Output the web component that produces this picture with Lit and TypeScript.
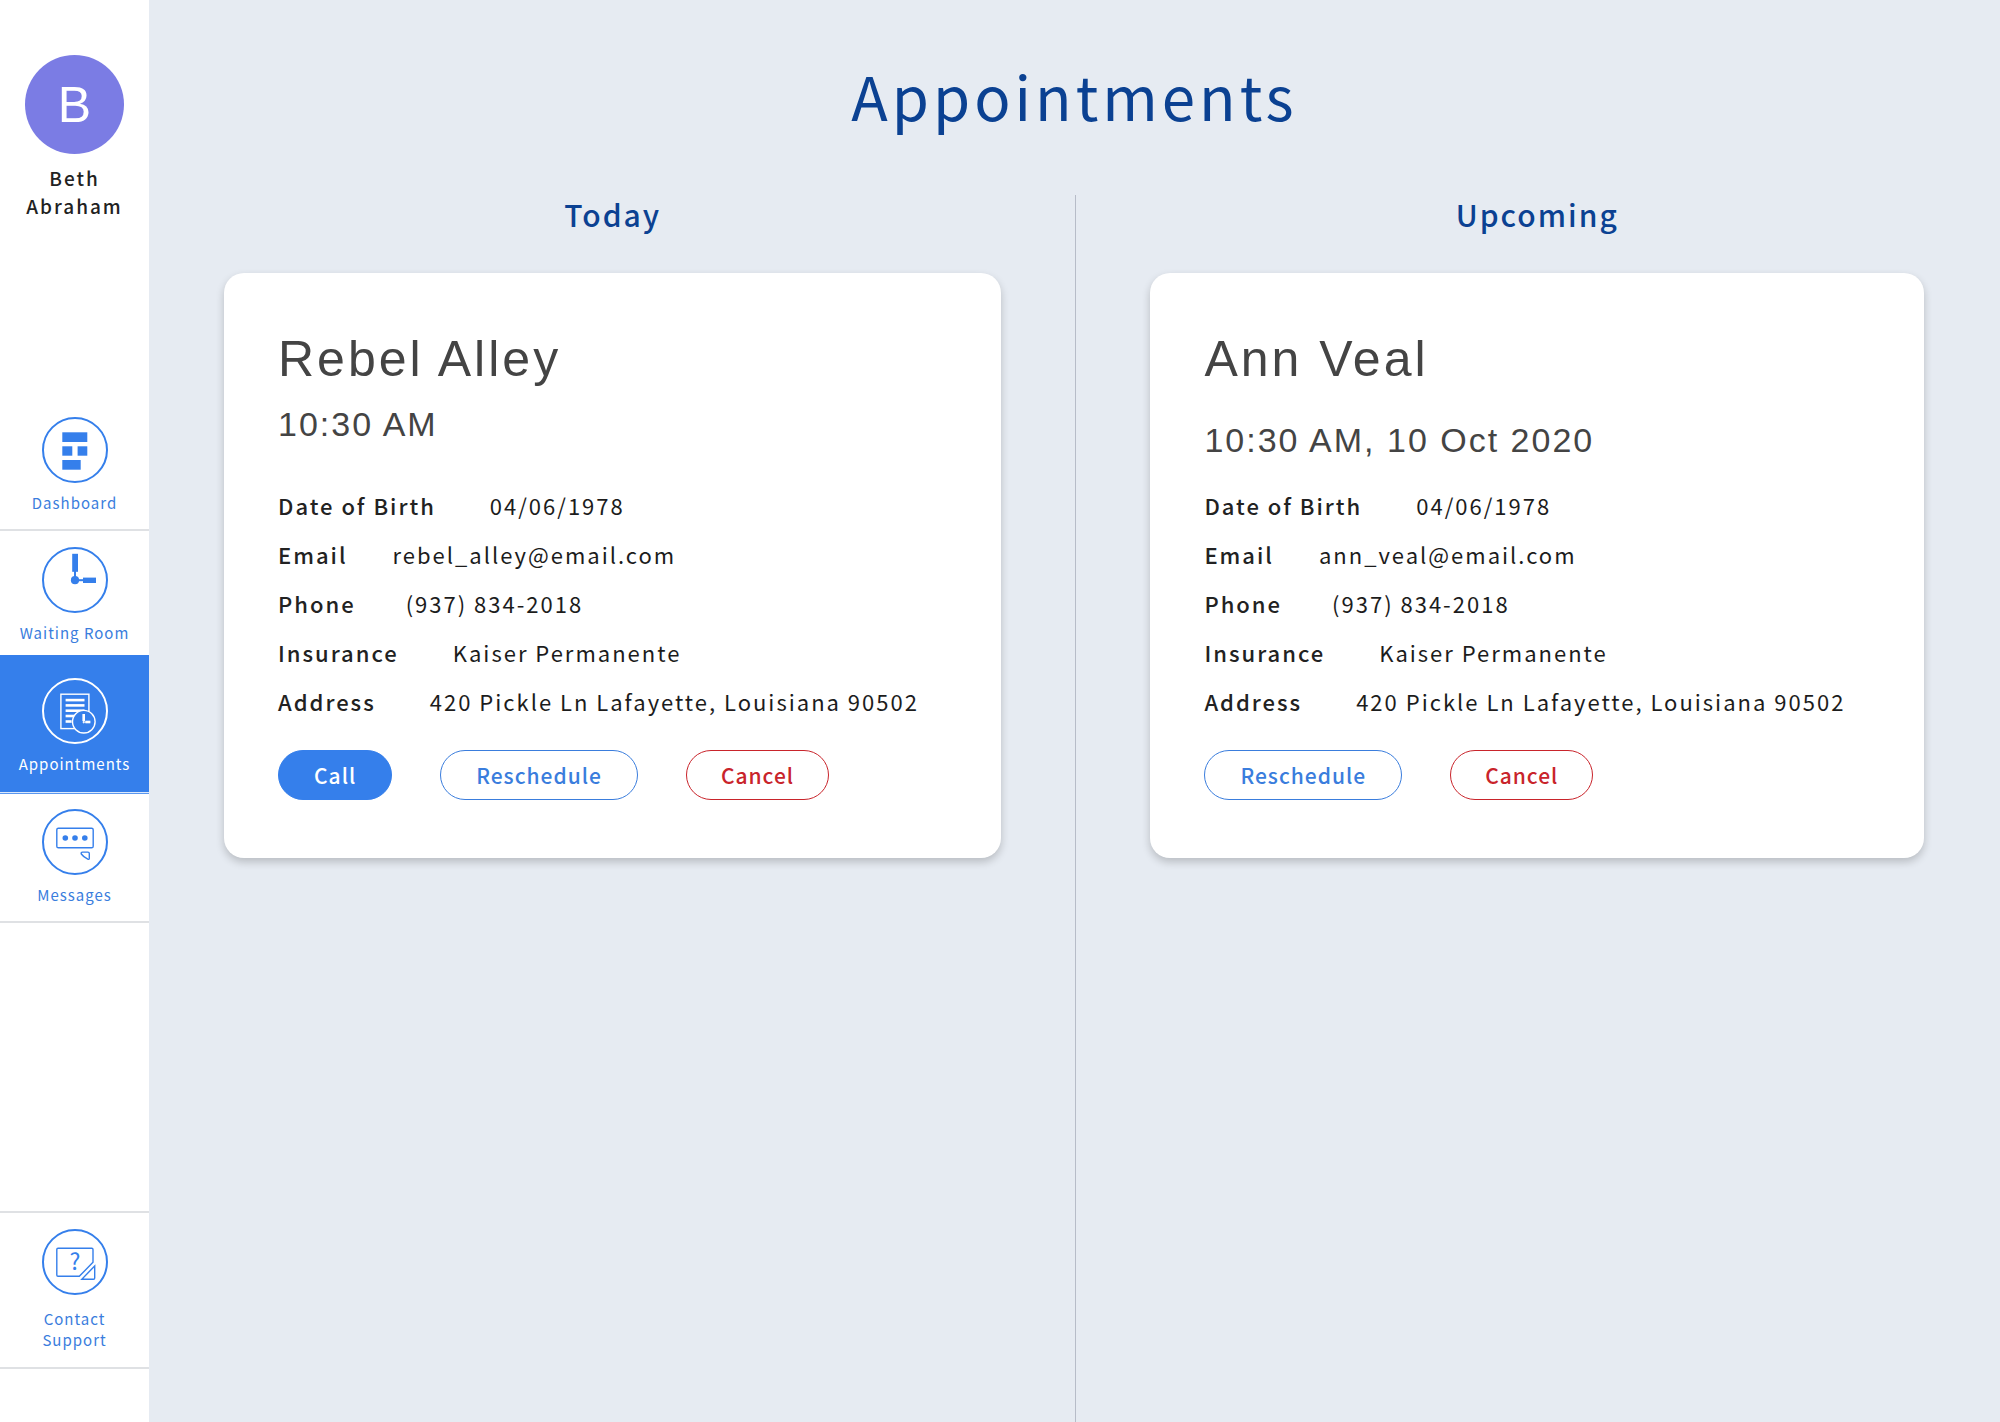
import { LitElement, html, css, svg, nothing, type TemplateResult } from "lit";
import { customElement, property } from "lit/decorators.js";
import { classMap } from "lit/directives/class-map.js";

type Gap = "narrow" | "medium" | "wide";

interface Detail {
  label: string;
  value: string;
  gap: Gap;
}

interface Appointment {
  name: string;
  time: string;
  canCall: boolean;
  details: Detail[];
}

interface NavEntry {
  label: string;
  icon: string;
  active?: boolean;
}

const details = (email: string): Detail[] => [
  { label: "Date of Birth", value: "04/06/1978", gap: "wide" },
  { label: "Email", value: email, gap: "narrow" },
  { label: "Phone", value: "(937) 834-2018", gap: "medium" },
  { label: "Insurance", value: "Kaiser Permanente", gap: "wide" },
  { label: "Address", value: "420 Pickle Ln Lafayette, Louisiana 90502", gap: "wide" },
];

const today: Appointment = {
  name: "Rebel Alley",
  time: "10:30 AM",
  canCall: true,
  details: details("rebel_alley@email.com"),
};

const upcoming: Appointment = {
  name: "Ann Veal",
  time: "10:30 AM, 10 Oct 2020",
  canCall: false,
  details: details("ann_veal@email.com"),
};

const navEntries: NavEntry[] = [
  { label: "Dashboard", icon: "dashboard" },
  { label: "Waiting Room", icon: "clock" },
  { label: "Appointments", icon: "appointments", active: true },
  { label: "Messages", icon: "messages" },
];

const icons: Record<string, TemplateResult> = {
  dashboard: svg`
    <g fill="currentColor">
      <rect x="20.3" y="15.3" width="25" height="9.7" />
      <rect x="20.3" y="29.3" width="10" height="9.4" />
      <rect x="35.6" y="29.3" width="9.7" height="9.4" />
      <rect x="20.3" y="43" width="18.4" height="9.7" />
    </g>`,
  clock: svg`
    <g fill="currentColor">
      <rect x="30.2" y="6.8" width="5.8" height="18" />
      <rect x="32" y="24" width="2" height="9" />
      <circle cx="33" cy="33.2" r="4.1" />
      <rect x="34" y="32.2" width="8" height="2" />
      <rect x="41" y="30.6" width="13" height="5.4" />
    </g>`,
  appointments: svg`
    <rect x="18.9" y="16.2" width="28" height="34.4" fill="none" stroke="currentColor" stroke-width="1.4" />
    <g fill="currentColor">
      <rect x="23.6" y="20.8" width="18.9" height="2.6" />
      <rect x="23.6" y="26.1" width="18.9" height="2.6" />
      <rect x="23.6" y="31.4" width="18.9" height="2.6" />
      <rect x="23.6" y="36.7" width="9" height="2.6" />
      <rect x="23.6" y="42.2" width="6" height="2.6" />
    </g>
    <circle cx="41.8" cy="43.7" r="11.3" class="knockout" stroke="currentColor" stroke-width="1.4" />
    <g fill="currentColor">
      <rect x="40.4" y="36" width="2.6" height="7" />
      <rect x="41.2" y="42.4" width="1" height="3" />
      <rect x="40.6" y="43.6" width="4" height="1" />
      <rect x="43.4" y="42.7" width="5" height="2.6" />
    </g>`,
  messages: svg`
    <rect x="14.8" y="19.2" width="36.4" height="19.6" rx="1.6" fill="none" stroke="currentColor" stroke-width="1.4" />
    <g fill="currentColor">
      <circle cx="23.3" cy="29" r="2.8" />
      <circle cx="33" cy="29" r="2.8" />
      <circle cx="42.8" cy="29" r="2.8" />
    </g>
    <path d="M40.6 43.1H45.9Q47.3 43.1 47.3 44.5V49.2Q47.3 50.8 45.8 50.1Q41 47.6 39.3 45Q38.6 43.3 40.6 43.1Z"
      fill="none" stroke="currentColor" stroke-width="1.4" />`,
  support: svg`
    <path d="M16 19.3H49.8Q51 19.3 51 20.5V33.3L37.3 47.3H16Q14.8 47.3 14.8 46.1V20.5Q14.8 19.3 16 19.3Z"
      fill="none" stroke="currentColor" stroke-width="1.4" />
    <path d="M52.7 37V49Q52.7 50.2 51.5 50.2H39.8Z" fill="none" stroke="currentColor" stroke-width="1.4" />
    <text class="mark" x="33" y="41" text-anchor="middle">?</text>`,
};

@customElement("nav-item")
export class NavItem extends LitElement {
  @property() label = "";
  @property() icon = "";
  @property({ type: Boolean, reflect: true }) active = false;

  static styles = css`
    :host {
      display: block;
    }
    .item {
      display: flex;
      flex-direction: column;
      align-items: center;
      gap: 8px;
      padding: 16px 8px 14px;
      border-bottom: 2px solid #dfe1e4;
      color: #3a7ddd;
      font-size: 15px;
      line-height: 24px;
      letter-spacing: 1px;
      text-align: center;
      text-decoration: none;
    }
    .active {
      position: relative;
      margin-top: -6px;
      padding-top: 23px;
      padding-bottom: 16px;
      border-bottom: 1px solid #dce9fc;
      background: #357feb;
      color: #fff;
      box-shadow: 0 1px 0 #5a97ef;
    }
    .stacked {
      gap: 13px;
      padding-bottom: 17px;
      border-top: 2px solid #dfe1e4;
      line-height: 21px;
    }
    .line {
      display: block;
    }
    svg {
      width: 66px;
      height: 66px;
      color: #357feb;
    }
    .active svg {
      color: #fff;
    }
    .knockout {
      fill: #357feb;
    }
    .mark {
      fill: currentColor;
      font-size: 23px;
      letter-spacing: 0;
    }
  `;

  render() {
    const lines = this.label.split("\n");
    return html`
      <a
        href="#"
        class=${classMap({ item: true, active: this.active, stacked: lines.length > 1 })}
        aria-current=${this.active ? "page" : nothing}
      >
        <svg viewBox="0 0 66 66" aria-hidden="true">
          <circle cx="33" cy="33" r="32" fill="none" stroke="currentColor" stroke-width="2" />
          ${icons[this.icon]}
        </svg>
        <span>${lines.map((line) => html`<span class="line">${line}</span>`)}</span>
      </a>
    `;
  }
}

@customElement("appointment-card")
export class AppointmentCard extends LitElement {
  @property({ attribute: false }) appointment!: Appointment;

  static styles = css`
    :host {
      display: block;
    }
    .card {
      padding: 50px 54px 58px;
      border-radius: 20px;
      background: #fff;
      box-shadow: 0 4px 8px rgba(0, 0, 0, 0.2);
    }
    .head {
      display: flex;
      flex-direction: column;
      gap: 25px;
      height: 158px;
      color: #444;
      font-family: "Liberation Sans", Arial, sans-serif;
      font-weight: 400;
    }
    .compact {
      gap: 9px;
    }
    .name {
      margin: 0;
      font-size: 50px;
      line-height: 72px;
      font-weight: 400;
      letter-spacing: 3px;
    }
    .time {
      margin: 0;
      font-size: 34px;
      line-height: 40px;
      letter-spacing: 2px;
    }
    .details {
      margin: 0;
      color: #1c1c1c;
      font-size: 22px;
      line-height: 49px;
      letter-spacing: 2px;
    }
    .row {
      display: flex;
    }
    .narrow {
      gap: 45px;
    }
    .medium {
      gap: 50px;
    }
    .wide {
      gap: 54px;
    }
    dt {
      color: #222;
      font-weight: 500;
    }
    dd {
      margin: 0;
    }
    .actions {
      display: flex;
      gap: 48px;
      margin-top: 24px;
    }
    button {
      height: 50px;
      padding: 0 35px;
      border: 1px solid currentColor;
      border-radius: 25px;
      background: #fff;
      color: #3a7ddd;
      font: inherit;
      font-size: 21px;
      font-weight: 500;
      letter-spacing: 1px;
    }
    .call {
      border-color: #357feb;
      background: #357feb;
      color: #fff;
    }
    .cancel {
      padding: 0 34px;
      color: #c9242b;
    }
  `;

  render() {
    const { name, time, canCall, details } = this.appointment;
    return html`
      <article class="card">
        <header class=${classMap({ head: true, compact: canCall })}>
          <h3 class="name">${name}</h3>
          <p class="time">${time}</p>
        </header>
        <dl class="details">
          ${details.map(
            (d) => html`<div class="row ${d.gap}"><dt>${d.label}</dt><dd>${d.value}</dd></div>`
          )}
        </dl>
        <div class="actions">
          ${canCall ? html`<button type="button" class="call">Call</button>` : nothing}
          <button type="button">Reschedule</button>
          <button type="button" class="cancel">Cancel</button>
        </div>
      </article>
    `;
  }
}

@customElement("app-root")
export class AppRoot extends LitElement {
  static styles = css`
    :host {
      display: block;
      font-family: "Noto Sans CJK SC", "Noto Sans", sans-serif;
    }
    .page {
      display: flex;
      min-height: 100vh;
      background: #e6ebf2;
    }
    .sidebar {
      display: flex;
      flex: 0 0 149px;
      flex-direction: column;
      background: #fff;
    }
    .user {
      display: flex;
      flex-direction: column;
      align-items: center;
      gap: 10px;
      padding-top: 55px;
      color: #222;
      font-size: 19px;
      line-height: 28px;
      font-weight: 500;
      letter-spacing: 2px;
      text-align: center;
    }
    .avatar {
      display: grid;
      place-items: center;
      width: 99px;
      height: 99px;
      border-radius: 50%;
      background: #7b7ce4;
      color: #fff;
      font-family: "Liberation Sans", Arial, sans-serif;
      font-size: 50px;
      font-weight: 400;
      letter-spacing: 0;
    }
    .first,
    .last {
      display: block;
    }
    .nav {
      margin-top: 181px;
    }
    .support {
      margin-top: auto;
      margin-bottom: 53px;
    }
    .main {
      display: flex;
      flex: 1;
      flex-direction: column;
      color: #0b4192;
    }
    .title {
      margin: 0;
      padding-top: 53px;
      font-size: 60px;
      line-height: 84px;
      font-weight: 400;
      letter-spacing: 4px;
      text-align: center;
    }
    .columns {
      display: grid;
      flex: 1;
      grid-template-columns: 201fr 1px 200fr;
      gap: 74px;
      margin-top: 58px;
      padding: 0 76px 0 75px;
    }
    .rule {
      background: #b7bcc8;
    }
    .heading {
      margin: 0 0 40px;
      font-size: 30px;
      line-height: 38px;
      font-weight: 500;
      letter-spacing: 2px;
      text-align: center;
    }
  `;

  render() {
    return html`
      <div class="page">
        <aside class="sidebar">
          <div class="user">
            <div class="avatar">B</div>
            <div><span class="first">Beth</span><span class="last">Abraham</span></div>
          </div>
          <nav class="nav" aria-label="Main">
            ${navEntries.map(
              (n) => html`<nav-item .label=${n.label} .icon=${n.icon} ?active=${!!n.active}></nav-item>`
            )}
          </nav>
          <nav-item class="support" .label=${"Contact\nSupport"} icon="support"></nav-item>
        </aside>
        <main class="main">
          <h1 class="title">Appointments</h1>
          <div class="columns">
            <section>
              <h2 class="heading">Today</h2>
              <appointment-card .appointment=${today}></appointment-card>
            </section>
            <div class="rule"></div>
            <section>
              <h2 class="heading">Upcoming</h2>
              <appointment-card .appointment=${upcoming}></appointment-card>
            </section>
          </div>
        </main>
      </div>
    `;
  }
}
